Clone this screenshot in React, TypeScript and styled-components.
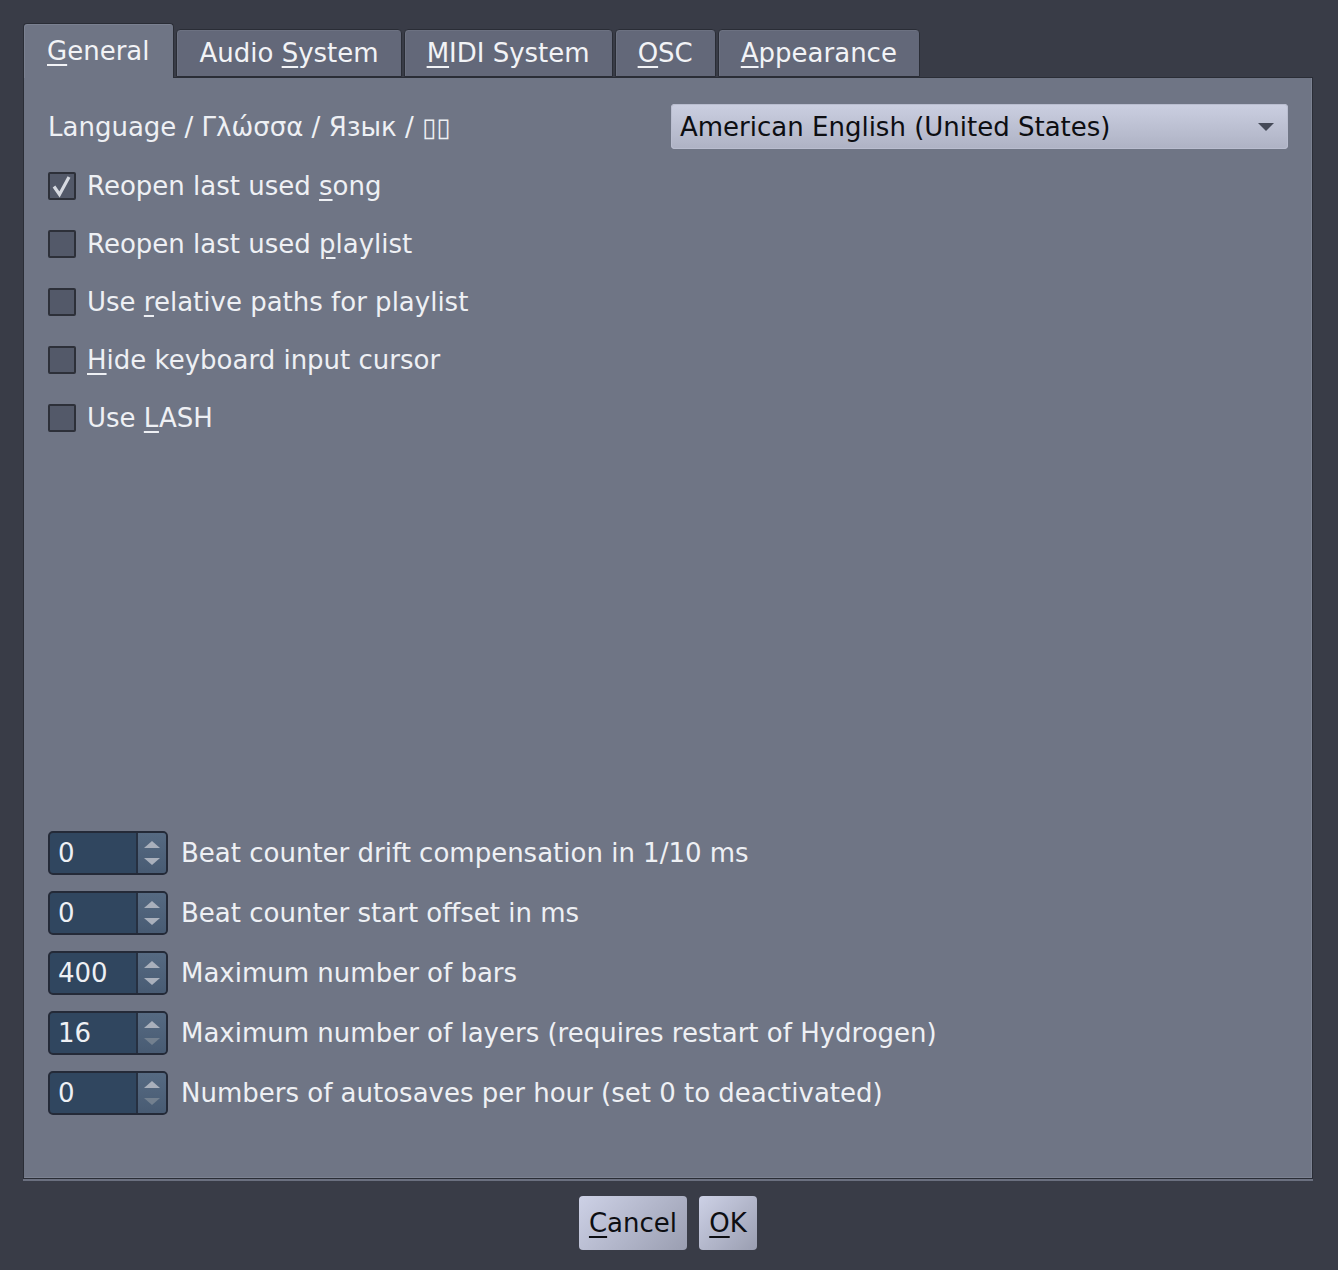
import React from "react";
import styled, { createGlobalStyle } from "styled-components";

const GlobalStyle = createGlobalStyle`
  html, body {
    margin: 0;
    padding: 0;
    background: #393c47;
  }
  body {
    font-family: "DejaVu Sans", "Noto Sans CJK SC", sans-serif;
    font-size: 26px;
    color: #eef0f4;
  }
`;

type Tab = { label: string; key: number; selected?: boolean };

const tabs: Tab[] = [
  { label: "General", key: 0, selected: true },
  { label: "Audio System", key: 6 },
  { label: "MIDI System", key: 0 },
  { label: "OSC", key: 0 },
  { label: "Appearance", key: 0 },
];

type Check = { label: string; key: number; checked?: boolean };

const checks: Check[] = [
  { label: "Reopen last used song", key: 17, checked: true },
  { label: "Reopen last used playlist", key: 17 },
  { label: "Use relative paths for playlist", key: 4 },
  { label: "Hide keyboard input cursor", key: 0 },
  { label: "Use LASH", key: 4 },
];

type Spin = { value: string; label: string; upDim?: boolean; downDim?: boolean };

const spins: Spin[] = [
  { value: "0", label: "Beat counter drift compensation in 1/10 ms" },
  { value: "0", label: "Beat counter start offset in ms" },
  { value: "400", label: "Maximum number of bars" },
  { value: "16", label: "Maximum number of layers (requires restart of Hydrogen)", downDim: true },
  { value: "0", label: "Numbers of autosaves per hour (set 0 to deactivated)", downDim: true },
];

// label text with the keyboard-shortcut letter underlined, Qt style
const withMnemonic = (text: string, index: number) => (
  <span>
    {text.slice(0, index)}
    <Mnemonic>{text[index]}</Mnemonic>
    {text.slice(index + 1)}
  </span>
);

export default function App() {
  return (
    <>
      <GlobalStyle />
      <Dialog>
        <TabBar>
          {tabs.map((t) => (
            <TabButton key={t.label} $selected={t.selected}>
              {withMnemonic(t.label, t.key)}
            </TabButton>
          ))}
        </TabBar>
        <Panel>
          <LanguageRow>
            <span>Language / Γλώσσα / Язык / ▯▯</span>
            <Combo>
              <span>American English (United States)</span>
              <ComboArrow />
            </Combo>
          </LanguageRow>
          <CheckList>
            {checks.map((c) => (
              <CheckRow key={c.label}>
                <CheckBox>
                  {c.checked && (
                    <svg width="24" height="24" viewBox="0 0 24 24">
                      <polyline
                        points="4,12.5 9.5,20.5 19,3"
                        fill="none"
                        stroke="#d6d9e0"
                        strokeWidth="3.2"
                      />
                    </svg>
                  )}
                </CheckBox>
                {withMnemonic(c.label, c.key)}
              </CheckRow>
            ))}
          </CheckList>
          <Spacer />
          <SpinList>
            {spins.map((s, i) => (
              <SpinRow key={i}>
                <SpinBox>
                  <SpinValue>{s.value}</SpinValue>
                  <SpinButtons>
                    <Arrow $up $dim={s.upDim} />
                    <Arrow $dim={s.downDim} />
                  </SpinButtons>
                </SpinBox>
                <span>{s.label}</span>
              </SpinRow>
            ))}
          </SpinList>
        </Panel>
        <ButtonRow>
          <PushButton $width={108}>{withMnemonic("Cancel", 0)}</PushButton>
          <PushButton $width={58}>{withMnemonic("OK", 0)}</PushButton>
        </ButtonRow>
      </Dialog>
    </>
  );
}

const Dialog = styled.div`
  display: flex;
  flex-direction: column;
  padding: 23px 0 0 23px;
  width: 1290px;
  height: 1247px;
`;

const Mnemonic = styled.span`
  text-decoration: underline;
  text-decoration-thickness: 2px;
  text-underline-offset: 4px;
`;

const TabBar = styled.div`
  display: flex;
  align-items: flex-end;
  gap: 2px;
  position: relative;
  z-index: 1;
  margin-bottom: -1px;
  padding-left: 1px;
`;

const TabButton = styled.div<{ $selected?: boolean }>`
  display: flex;
  align-items: center;
  box-sizing: border-box;
  height: ${(p) => (p.$selected ? 55 : 48)}px;
  padding: ${(p) => (p.$selected ? "0 24px 1px 23px" : "0 22px")};
  margin-bottom: ${(p) => (p.$selected ? 0 : 1)}px;
  margin-left: ${(p) => (p.$selected ? -1 : 0)}px;
  background: ${(p) => (p.$selected ? "#6f7585" : "#636879")};
  border: 1px solid #2a2d36;
  border-bottom: ${(p) => (p.$selected ? "none" : "1px solid #2a2d36")};
  border-radius: 4px 4px 0 0;
  box-shadow: inset 1px 1px 0 ${(p) => (p.$selected ? "#7b8191" : "#6c7181")};
  color: #f2f3f6;
  white-space: pre;
`;

const Panel = styled.div`
  display: flex;
  flex-direction: column;
  box-sizing: border-box;
  width: 1290px;
  height: 1102px;
  padding: 26px 24px 55px 24px;
  background: #6f7585;
  border: 1px solid #2a2d36;
  box-shadow: inset -1px -1px 0 #7c8292, 0 2px 0 #6b7080;
`;

const LanguageRow = styled.div`
  display: flex;
  align-items: center;
  justify-content: space-between;
  height: 45px;
`;

const Combo = styled.div`
  display: flex;
  align-items: center;
  justify-content: space-between;
  box-sizing: border-box;
  width: 617px;
  height: 45px;
  padding: 0 14px 0 9px;
  border-radius: 4px;
  background: linear-gradient(#cbcfe1, #aeb2c4);
  box-shadow: inset 0 0 0 1px #b9bdcf;
  color: #0d0e12;
`;

const ComboArrow = styled.div`
  width: 0;
  height: 0;
  border-left: 8px solid transparent;
  border-right: 8px solid transparent;
  border-top: 8px solid #454a58;
`;

const CheckList = styled.div`
  display: flex;
  flex-direction: column;
  margin-top: 8px;
`;

const CheckRow = styled.div`
  display: flex;
  align-items: center;
  gap: 11px;
  height: 58px;
`;

const CheckBox = styled.div`
  display: flex;
  align-items: center;
  justify-content: center;
  box-sizing: border-box;
  width: 28px;
  height: 28px;
  background: #535969;
  border: 2px solid #2d3039;
  border-radius: 2px;
`;

const Spacer = styled.div`
  flex: 1;
`;

const SpinList = styled.div`
  display: flex;
  flex-direction: column;
`;

const SpinRow = styled.div`
  display: flex;
  align-items: center;
  gap: 13px;
  height: 60px;
`;

const SpinBox = styled.div`
  display: flex;
  box-sizing: border-box;
  width: 120px;
  height: 44px;
  background: #30465f;
  border: 2px solid #242a38;
  border-radius: 5px;
  overflow: hidden;
`;

const SpinValue = styled.div`
  flex: 1;
  display: flex;
  align-items: center;
  padding-left: 8px;
  color: #eef0f4;
`;

const SpinButtons = styled.div`
  display: flex;
  flex-direction: column;
  align-items: center;
  justify-content: center;
  gap: 10px;
  width: 28px;
  background: linear-gradient(#566a82, #485b73);
  border-left: 2px solid #263041;
`;

const Arrow = styled.div<{ $up?: boolean; $dim?: boolean }>`
  width: 0;
  height: 0;
  border-left: 8px solid transparent;
  border-right: 8px solid transparent;
  ${(p) => (p.$up ? "border-bottom" : "border-top")}: 7px solid
    ${(p) => (p.$dim ? "#73808f" : "#a9b0bc")};
`;

const ButtonRow = styled.div`
  display: flex;
  justify-content: center;
  gap: 12px;
  margin-top: 17px;
`;

const PushButton = styled.div<{ $width: number }>`
  display: flex;
  align-items: center;
  justify-content: center;
  width: ${(p) => p.$width}px;
  height: 54px;
  border-radius: 4px;
  background: linear-gradient(135deg, #cdd1e6, #9a9eb1);
  color: #0d0e12;
`;
